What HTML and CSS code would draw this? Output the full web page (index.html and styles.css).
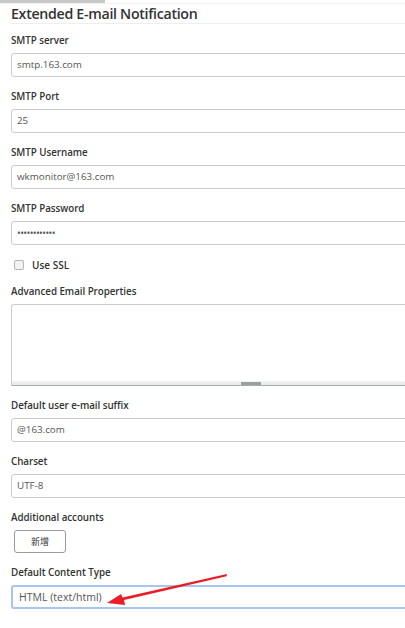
FILE: index.html
```html
<!DOCTYPE html>
<html>
<head>
<meta charset="utf-8">
<link rel="stylesheet" href="styles.css">
</head>
<body>
<div class="topbar"><span class="topbar-tab"></span></div>
<div class="page">
  <h2 class="section-title">Extended E-mail Notification</h2>
  <div class="field">
    <div class="label">SMTP server</div>
    <div class="input">smtp.163.com</div>
  </div>
  <div class="field">
    <div class="label">SMTP Port</div>
    <div class="input">25</div>
  </div>
  <div class="field">
    <div class="label">SMTP Username</div>
    <div class="input">wkmonitor@163.com</div>
  </div>
  <div class="field">
    <div class="label">SMTP Password</div>
    <div class="input password">••••••••••••</div>
  </div>
  <div class="check-row">
    <span class="checkbox"></span>
    <span class="check-label">Use SSL</span>
  </div>
  <div class="field">
    <div class="label">Advanced Email Properties</div>
    <div class="textarea">
      <div class="resize-bar"><span class="resize-thumb"></span></div>
    </div>
  </div>
  <div class="field">
    <div class="label">Default user e-mail suffix</div>
    <div class="input">@163.com</div>
  </div>
  <div class="field">
    <div class="label">Charset</div>
    <div class="input">UTF-8</div>
  </div>
  <div class="field">
    <div class="label">Additional accounts</div>
    <button class="btn">新增</button>
  </div>
  <div class="field">
    <div class="label">Default Content Type</div>
    <div class="input focused">HTML (text/html)</div>
  </div>
</div>
<svg class="arrow" width="405" height="628" viewBox="0 0 405 628">
  <polygon points="227,574 226.5,576.2 124,600 125,605 107,603 121,594 122.5,597.5" fill="#ec1c24"/>
</svg>
</body>
</html>
```

FILE: styles.css
```css
html, body {
  margin: 0;
  padding: 0;
  background: #ffffff;
  overflow: hidden;
  width: 405px;
  height: 628px;
}
body {
  position: relative;
  font-family: "Open Sans", "Noto Sans", "Liberation Sans", sans-serif;
  color: #333;
}
.topbar {
  height: 3px;
  display: flex;
  border-bottom: 1px solid #f2f2f2;
}
.topbar-tab {
  width: 105px;
  height: 3px;
  background: #c8c8c8;
}
.page {
  padding-left: 11px;
  width: 430px;
}
.section-title {
  margin: 0;
  font-size: 14.2px;
  font-weight: 600;
  line-height: 19px;
  height: 19px;
  color: #333;
  border-bottom: 1px solid #eeeeee;
  letter-spacing: -0.3px;
}
.field {
  margin-top: 8px;
  margin-bottom: 11px;
}
.field + .field {
  margin-top: 0;
}
.label {
  font-size: 9.8px;
  font-weight: 600;
  line-height: 16px;
  height: 16px;
  padding-top: 1px;
  margin-bottom: 4px;
  color: #333;
  letter-spacing: -0.05px;
}
.input {
  box-sizing: border-box;
  height: 24px;
  border: 1px solid #cccccc;
  border-radius: 3px;
  padding: 0 5px;
  font-size: 9.8px;
  line-height: 22px;
  color: #555;
}
.input.password {
  font-size: 10px;
  letter-spacing: -0.6px;
}
.input.focused {
  border: 2px solid #a8c4f2;
  padding: 0 6px;
  line-height: 20px;
  font-size: 10.5px;
}
.check-row {
  display: flex;
  align-items: center;
  height: 18px;
  margin-top: 0;
  margin-bottom: 9px;
  padding-left: 3px;
}
.checkbox {
  box-sizing: border-box;
  width: 10px;
  height: 10px;
  border: 1px solid #b5b5b5;
  border-radius: 2px;
  background: #f2f2f2;
  margin-right: 8px;
}
.check-label {
  font-size: 10px;
  font-weight: 600;
  color: #333;
}
.textarea {
  box-sizing: border-box;
  height: 82px;
  border: 1px solid #cccccc;
  border-bottom: none;
  border-radius: 3px 3px 0 0;
  display: flex;
  flex-direction: column;
  justify-content: flex-end;
}
.resize-bar {
  height: 4px;
  background: linear-gradient(#f3f4f5, #e6e8ea);
  border-bottom: 1px solid #a6acb2;
  position: relative;
}
.resize-thumb {
  position: absolute;
  left: 229px;
  top: 1px;
  width: 20px;
  height: 3px;
  background: #9aa09c;
}
.btn {
  display: block;
  box-sizing: border-box;
  margin-left: 3px;
  width: 52px;
  height: 23px;
  border: 1px solid #9a9a9a;
  border-radius: 3px;
  background: #fff;
  font-family: "Noto Sans CJK SC", sans-serif;
  font-size: 9px;
  color: #333;
  padding: 0;
}
.arrow {
  position: absolute;
  left: 0;
  top: 0;
  pointer-events: none;
}
```
